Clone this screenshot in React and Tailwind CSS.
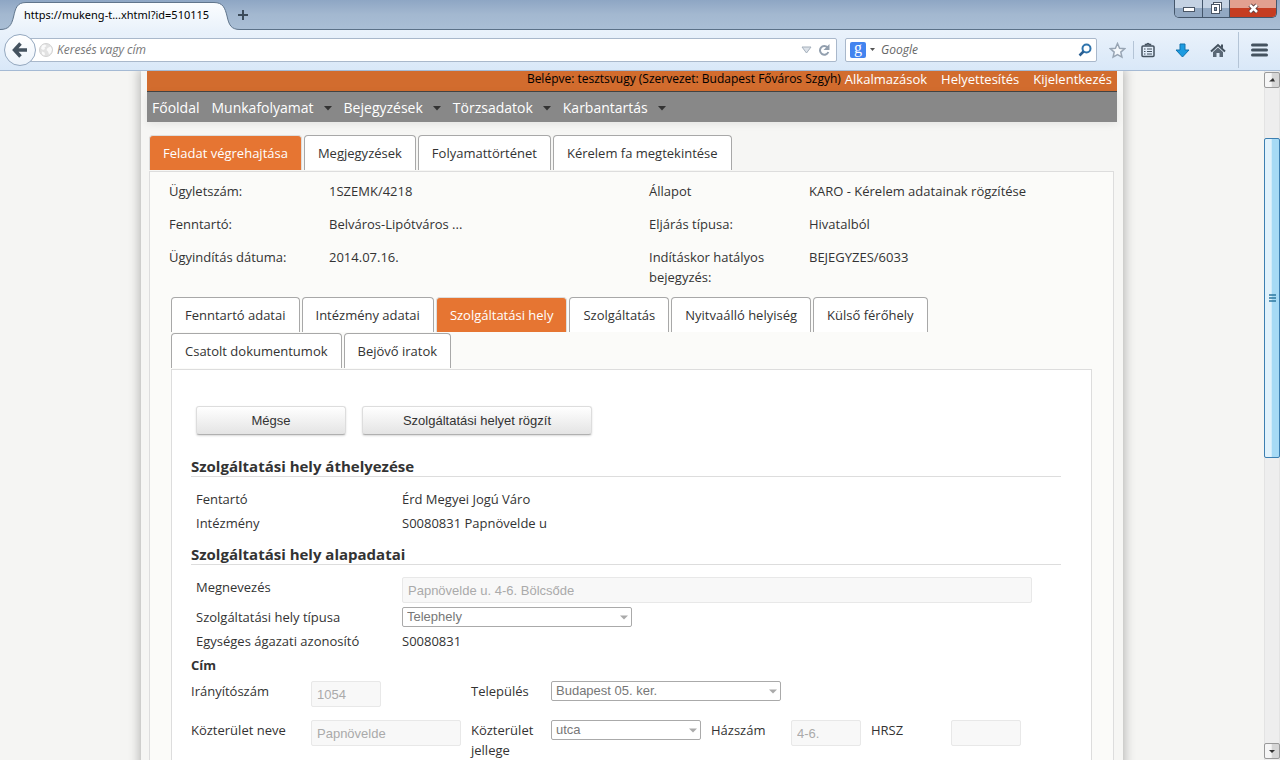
import clsx from "clsx";

const MENU_ITEMS = [
  { label: "Főoldal" },
  { label: "Munkafolyamat", hasMenu: true },
  { label: "Bejegyzések", hasMenu: true },
  { label: "Törzsadatok", hasMenu: true },
  { label: "Karbantartás", hasMenu: true },
];

const TASK_TABS = [
  "Feladat végrehajtása",
  "Megjegyzések",
  "Folyamattörténet",
  "Kérelem fa megtekintése",
];

const DATA_TABS = [
  "Fenntartó adatai",
  "Intézmény adatai",
  "Szolgáltatási hely",
  "Szolgáltatás",
  "Nyitvaálló helyiség",
  "Külső férőhely",
  "Csatolt dokumentumok",
  "Bejövő iratok",
];

const CASE_DATA = [
  ["Ügyletszám:", "1SZEMK/4218"],
  ["Állapot", "KARO - Kérelem adatainak rögzítése"],
  ["Fenntartó:", "Belváros-Lipótváros ..."],
  ["Eljárás típusa:", "Hivatalból"],
  ["Ügyindítás dátuma:", "2014.07.16."],
  ["Indításkor hatályos bejegyzés:", "BEJEGYZES/6033"],
];

export default function App() {
  return (
    <div className="flex h-screen flex-col overflow-hidden bg-[#f5f5f3]">
      <TitleBar />
      <Toolbar />
      <div className="flex min-h-0 flex-1">
        <main className="min-w-0 flex-1 overflow-hidden font-['Open_Sans',sans-serif] text-[13px] leading-5 text-[#333333]">
          <Page />
        </main>
        <ScrollBar />
      </div>
    </div>
  );
}

/* Browser window */

function TitleBar() {
  return (
    <header className="flex h-[30px] shrink-0 items-start justify-between border-b border-[#5b7188] bg-linear-to-b from-[#8ea6c4] via-[#a3b8d0] to-[#a9bed5] font-['Noto_Sans',sans-serif]">
      <div className="flex items-center">
        <div className="relative flex h-[30px] w-60 items-center pl-6">
          <svg
            className="absolute top-0 left-0"
            width="240"
            height="30"
            viewBox="0 0 240 30"
            aria-hidden="true"
          >
            <defs>
              <linearGradient id="tab" x1="0" y1="0" x2="0" y2="1">
                <stop offset="0" stopColor="#fbfdff" />
                <stop offset="1" stopColor="#eaf2fb" />
              </linearGradient>
            </defs>
            <path
              d="M0 29.5 C9 29.5 11.500 25 13.500 17 C15.500 8 17 2.500 26 2.500 H214 C223 2.500 225 8 227 16 C229 25 231 29.500 240 29.500 V30 H0 Z"
              fill="url(#tab)"
            />
            <path
              d="M0 29.5 C9 29.5 11.500 25 13.500 17 C15.500 8 17 2.500 26 2.500 H214 C223 2.500 225 8 227 16 C229 25 231 29.500 240 29.500"
              fill="none"
              stroke="#60758c"
            />
          </svg>
          <span className="relative text-[11px] text-black">
            https://mukeng-t...xhtml?id=510115
          </span>
        </div>
        <button type="button" aria-label="Új lap" className="-ml-1">
          <svg width="14" height="14" viewBox="0 0 14 14">
            <path d="M7 2v10M2 7h10" stroke="#3c4b5a" strokeWidth="2" />
          </svg>
        </button>
      </div>
      <div className="mr-[3px] flex h-[18px] overflow-hidden rounded-b-[5px] border border-t-0 border-[#44566b]">
        <button
          type="button"
          aria-label="Kis méret"
          className="flex w-7 items-center justify-center border-r border-[#44566b] bg-linear-to-b from-[#c4d2e3] from-50% to-[#92a8c2] to-50%"
        >
          <svg width="14" height="8" viewBox="0 0 14 8">
            <rect x="1.500" y="2.500" width="11" height="4" fill="#fff" stroke="#4a5666" />
          </svg>
        </button>
        <button
          type="button"
          aria-label="Előző méret"
          className="flex w-[27px] items-center justify-center border-r border-[#44566b] bg-linear-to-b from-[#c4d2e3] from-50% to-[#92a8c2] to-50%"
        >
          <svg width="13" height="13" viewBox="0 0 13 13" stroke="#4a5666">
            <rect x="3.500" y="0.500" width="8" height="8" fill="#fff" />
            <rect x="1.500" y="2.500" width="8" height="9" fill="#fff" />
            <rect x="4.500" y="5.500" width="2" height="3" fill="#8da4bf" />
          </svg>
        </button>
        <button
          type="button"
          aria-label="Bezárás"
          className="flex w-[46px] items-center justify-center bg-linear-to-b from-[#e2a090] from-50% to-[#c53d22] to-50%"
        >
          <svg width="13" height="11" viewBox="0 0 13 11">
            <path d="M3 2l7 7M10 2l-7 7" stroke="#5d3a3a" strokeWidth="4.500" />
            <path d="M3 2l7 7M10 2l-7 7" stroke="#fff" strokeWidth="2.500" />
          </svg>
        </button>
      </div>
    </header>
  );
}

function Toolbar() {
  return (
    <div className="flex h-[41px] shrink-0 items-center border-b border-[#a5bad4] bg-linear-to-b from-[#eaf2fb] to-[#d9e8f8] pl-1 font-['Open_Sans',sans-serif] text-xs">
      <button
        type="button"
        aria-label="Vissza"
        className="z-10 flex size-8 shrink-0 items-center justify-center rounded-full border border-[#94a8bf] bg-linear-to-b from-white to-[#ecf3fb]"
      >
        <svg width="16" height="16" viewBox="0 0 16 16">
          <path
            d="M8.500 1.500L2.500 8l6 6.500M3 8h12"
            fill="none"
            stroke="#44525f"
            strokeWidth="3.500"
          />
        </svg>
      </button>
      <div className="-ml-2 flex h-6 flex-1 items-center rounded-xs border border-[#a9b8cb] bg-white pr-1.5 pl-2.5">
        <GlobeIcon />
        <input
          type="text"
          aria-label="Keresés vagy cím"
          placeholder="Keresés vagy cím"
          className="ml-1 min-w-0 flex-1 italic outline-none placeholder:text-[#777777]"
        />
        <svg width="11" height="8" viewBox="0 0 11 8" aria-hidden="true">
          <path d="M1 1h9L5.500 7z" fill="#dce2e9" stroke="#a5b0bc" />
        </svg>
        <button type="button" aria-label="Frissítés" className="ml-1.5">
          <svg width="12" height="12" viewBox="0 0 12 12">
            <path
              d="M9.500 3.500A4.300 4.300 0 1 0 10.300 8"
              fill="none"
              stroke="#929fae"
              strokeWidth="2"
            />
            <path d="M11.500 0v6h-6z" fill="#929fae" />
          </svg>
        </button>
      </div>
      <div className="ml-2 flex h-6 w-[252px] items-center rounded-xs border border-[#a9b8cb] bg-white px-1">
        <span className="flex size-4 items-center justify-center rounded-xs bg-[#4384ef] pb-1 font-['Liberation_Serif',serif] text-base leading-none text-white">
          g
        </span>
        <svg className="ml-1" width="5" height="4" viewBox="0 0 5 4" aria-hidden="true">
          <path d="M0 0h5L2.500 3z" fill="#555" />
        </svg>
        <input
          type="text"
          aria-label="Google"
          placeholder="Google"
          className="ml-1.5 min-w-0 flex-1 italic outline-none placeholder:text-[#666666]"
        />
        <button type="button" aria-label="Keresés">
          <svg width="14" height="14" viewBox="0 0 14 14" fill="none">
            <circle cx="8.500" cy="5.500" r="4" stroke="#2f74ad" strokeWidth="2" />
            <path d="M5.500 8.500L1.500 12.500" stroke="#2b5f92" strokeWidth="2.500" />
          </svg>
        </button>
      </div>
      <div className="flex items-center pl-3">
        <button type="button" aria-label="Könyvjelző" className="w-5">
          <svg width="17" height="17" viewBox="0 0 17 17">
            <path
              d="M8.500 1.500l2.100 4.700 5 .5-3.800 3.400 1.100 5-4.400-2.600-4.400 2.600 1.100-5L1.400 6.700l5-.5z"
              fill="#f3f7fb"
              stroke="#98a5b4"
              strokeWidth="1.500"
            />
          </svg>
        </button>
        <span className="ml-1 h-[18px] w-px bg-[#b4c4d6]" />
        <button type="button" aria-label="Könyvjelzők" className="ml-[7px]">
          <svg width="14" height="16" viewBox="0 0 14 16" fill="none" stroke="#44525f">
            <path d="M4.500 3.500V2.500h1.500a1 1 0 0 1 2 0h1.500v1" strokeWidth="1.500" />
            <rect x="1" y="4" width="12" height="10.500" rx="1" strokeWidth="1.500" />
            <path d="M3 7h1.500M6 7h5M3 9.500h1.500M6 9.500h5M3 12h1.500M6 12h5" />
          </svg>
        </button>
        <button type="button" aria-label="Letöltések" className="ml-5">
          <svg width="15" height="15" viewBox="0 0 15 15">
            <path
              d="M5 1h5v6h4L7.500 14 1 7h4z"
              fill="#1c9be0"
              stroke="#1073ad"
            />
          </svg>
        </button>
        <button type="button" aria-label="Kezdőlap" className="ml-5">
          <svg width="16" height="15" viewBox="0 0 16 15">
            <path d="M1 8.500L8 2l7 6.500" fill="none" stroke="#44525f" strokeWidth="2" />
            <path d="M3 9l5-4.600L13 9v5H9.500v-4h-3v4H3z" fill="#5a6876" />
            <path d="M11 1.500h2v4l-2-2z" fill="#44525f" />
          </svg>
        </button>
        <span className="ml-3 h-9 w-px bg-[#b4c4d6]" />
        <button type="button" aria-label="Menü" className="mr-3 ml-3">
          <svg width="17" height="14" viewBox="0 0 17 14">
            <path
              d="M1.500 2h14M1.500 7h14M1.500 12h14"
              stroke="#44525f"
              strokeWidth="3"
              strokeLinecap="round"
            />
          </svg>
        </button>
      </div>
    </div>
  );
}

function GlobeIcon() {
  return (
    <svg width="14" height="14" viewBox="0 0 14 14" aria-hidden="true">
      <circle cx="7" cy="7" r="6.500" fill="#e2e2e2" stroke="#d2d2d2" />
      <path
        d="M3 2.500l3-1 1.500 1.500-2 1.500L6 6 4 7 2 5.500zM8.500 5l3-1.500 1.500 3-1 3-2 2L9 8.500 7.500 7zM3 8.500l2.500 1 .5 2-1 1L3 11z"
        fill="#fafafa"
      />
    </svg>
  );
}

function ScrollBar() {
  return (
    <div className="flex w-4 shrink-0 flex-col border-x border-[#e3e3e3] bg-[#eeeeee] py-px">
      <ScrollButton label="Görgetés fel" path="M3 6.500h6L7 3z" />
      <div className="flex min-h-0 flex-1 flex-col">
        <div className="basis-[50px]" />
        <div className="-mr-px -ml-px flex h-[320px] shrink-0 items-center justify-center rounded-xs border border-[#3c7fb1] bg-linear-to-r from-[#e0f2fc] from-45% to-[#a6daf5] to-50%">
          <svg width="7" height="8" viewBox="0 0 7 8" aria-hidden="true">
            <path d="M0 1h7M0 4h7M0 7h7" stroke="#2c78a0" strokeWidth="1.500" />
          </svg>
        </div>
      </div>
      <ScrollButton label="Görgetés le" path="M3 4h6L6 7z" />
    </div>
  );
}

function ScrollButton({ label, path }) {
  return (
    <button
      type="button"
      aria-label={label}
      className="-mr-px -ml-px flex h-4 shrink-0 items-center justify-center rounded-xs border border-[#999999] bg-linear-to-r from-[#f6f6f6] from-45% to-[#d6d6d6] to-50%"
    >
      <svg width="12" height="10" viewBox="0 0 12 10">
        <path d={path} fill="#333" />
      </svg>
    </button>
  );
}

/* Page */

function Page() {
  return (
    <div className="mx-auto min-h-full w-full max-w-[982px] bg-[#f6f6f4] px-1.5 shadow-[0_0_10px_2px_rgba(0,0,0,0.25)]">
      <div className="flex h-[21px] items-start justify-end border-b border-[#444444] bg-[#d26c2e] pr-[5px]">
        <span className="-mt-0.5 text-xs leading-5 text-black">
          Belépve: tesztsvugy (Szervezet: Budapest Főváros Szgyh)
        </span>
        <div className="-mt-0.5 ml-1 flex gap-3.5 text-white">
          <a href="#alkalmazasok">Alkalmazások</a>
          <a href="#helyettesites">Helyettesítés</a>
          <a href="#kijelentkezes">Kijelentkezés</a>
        </div>
      </div>
      <nav className="flex h-[30px] items-center bg-[#888888] pt-0.5 pl-[5px] text-sm text-white shadow-[0_2px_8px_rgba(0,0,0,0.08)]">
        {MENU_ITEMS.map((item) => (
          <a key={item.label} href="#menu" className="mr-3 flex items-center">
            {item.label}
            {item.hasMenu && (
              <svg className="ml-2.5" width="8" height="5" viewBox="0 0 8 5">
                <path d="M0 0h8L4 4.500z" fill="#333" />
              </svg>
            )}
          </a>
        ))}
      </nav>

      <div className="mr-[3px] ml-0.5 pt-[13px]">
        <Tabs items={TASK_TABS} active="Feladat végrehajtása" />
        <section className="border border-[#dddddd] bg-[#fbfbf9] px-[21px] pt-[9px]">
          <dl className="-ml-0.5 grid grid-cols-[160px_320px_160px_1fr] gap-y-[13px]">
            {CASE_DATA.map(([label, value]) => (
              <CaseField key={label} label={label} value={value} />
            ))}
          </dl>
          <div className="mt-2.5">
            <Tabs items={DATA_TABS} active="Szolgáltatási hely" />
            <ServicePlaceForm />
          </div>
        </section>
      </div>
    </div>
  );
}

function Tabs({ items, active }) {
  return (
    <div role="tablist" className="flex flex-wrap gap-x-0.5 gap-y-px pb-px">
      {items.map((item) => (
        <button
          key={item}
          type="button"
          role="tab"
          aria-selected={item === active}
          className={clsx(
            "h-[35px] rounded-t border border-b-0 px-[13px]",
            item === active
              ? "border-[#dddddd] bg-[#e67532] text-white"
              : "border-[#a8a8a8] bg-white"
          )}
        >
          {item}
        </button>
      ))}
    </div>
  );
}

function CaseField({ label, value }) {
  return (
    <>
      <dt className="pr-5">{label}</dt>
      <dd>{value}</dd>
    </>
  );
}

function ServicePlaceForm() {
  return (
    <form className="border border-[#dddddd] bg-white pt-9 pr-[30px] pb-10 pl-[19px]">
      <div className="flex gap-4 pb-2.5 pl-[5px]">
        <FormButton className="w-[150px]">Mégse</FormButton>
        <FormButton className="w-[230px]">Szolgáltatási helyet rögzít</FormButton>
      </div>

      <SectionTitle>Szolgáltatási hely áthelyezése</SectionTitle>
      <div className="mt-3 flex flex-col gap-1 pl-[5px]">
        <TextRow label="Fentartó" value="Érd Megyei Jogú Váro" />
        <TextRow label="Intézmény" value="S0080831 Papnövelde u" />
      </div>

      <SectionTitle>Szolgáltatási hely alapadatai</SectionTitle>
      <div className="mt-3 flex flex-col gap-1 pl-[5px]">
        <div className="flex">
          <label htmlFor="name" className="w-[206px] shrink-0">
            Megnevezés
          </label>
          <TextInput
            id="name"
            value="Papnövelde u. 4-6. Bölcsőde"
            className="w-full max-w-[630px]"
          />
        </div>
        <div className="flex">
          <label htmlFor="type" className="w-[206px] shrink-0">
            Szolgáltatási hely típusa
          </label>
          <Select id="type" value="Telephely" className="w-[230px]" />
        </div>
        <TextRow label="Egységes ágazati azonosító" value="S0080831" />
      </div>

      <h3 className="mt-1 font-bold">Cím</h3>
      <div className="mt-1.5 flex">
        <label htmlFor="zip" className="w-[120px]">
          Irányítószám
        </label>
        <div className="w-40">
          <TextInput id="zip" value="1054" className="w-[70px]" />
        </div>
        <label htmlFor="city" className="w-20">
          Település
        </label>
        <Select id="city" value="Budapest 05. ker." className="w-[230px]" />
      </div>
      <div className="mt-[13px] flex">
        <label htmlFor="street" className="w-[120px]">
          Közterület neve
        </label>
        <div className="w-40">
          <TextInput id="street" value="Papnövelde" className="w-[150px]" />
        </div>
        <label htmlFor="street-type" className="w-20">
          Közterület jellege
        </label>
        <div className="w-40">
          <Select id="street-type" value="utca" className="w-[150px]" />
        </div>
        <label htmlFor="house" className="w-20">
          Házszám
        </label>
        <div className="w-20">
          <TextInput id="house" value="4-6." className="w-[70px]" />
        </div>
        <label htmlFor="lot" className="w-20">
          HRSZ
        </label>
        <TextInput id="lot" value="" className="w-[70px]" />
      </div>
    </form>
  );
}

function SectionTitle({ children }) {
  return (
    <h2 className="mt-[11px] border-b border-[#dddddd] text-[15px] leading-5 font-bold">
      {children}
    </h2>
  );
}

function FormButton({ className, children }) {
  return (
    <button
      type="button"
      className={clsx(
        "h-[29px] rounded-[3px] border border-[#dddddd] border-b-[#b0b0b0] bg-linear-to-b from-white to-[#e4e4e4] font-['Liberation_Sans',sans-serif] text-[13px] shadow-[0_1px_2px_rgba(0,0,0,0.15)]",
        className
      )}
    >
      {children}
    </button>
  );
}

function TextRow({ label, value }) {
  return (
    <div className="flex">
      <span className="w-[206px] shrink-0">{label}</span>
      <span>{value}</span>
    </div>
  );
}

function TextInput({ id, value, className }) {
  return (
    <input
      id={id}
      type="text"
      value={value}
      disabled
      readOnly
      className={clsx(
        "h-[26px] rounded-xs border border-[#e8e8e8] bg-[#f8f8f8] px-[5px] font-['Liberation_Sans',sans-serif] text-[13px] text-[#aaaaaa]",
        className
      )}
    />
  );
}

function Select({ id, value, className }) {
  return (
    <div className={clsx("relative", className)}>
      <select
        id={id}
        disabled
        className="block h-5 w-full appearance-none rounded-xs border border-[#aaaaaa] bg-white px-1 font-['Liberation_Sans',sans-serif] text-[13px] leading-4 text-[#777777] opacity-100"
      >
        <option>{value}</option>
      </select>
      <svg
        className="absolute top-2 right-1"
        width="8"
        height="5"
        viewBox="0 0 8 5"
        aria-hidden="true"
      >
        <path d="M0 .5h8L4 4.500z" fill="#aaa" />
      </svg>
    </div>
  );
}
